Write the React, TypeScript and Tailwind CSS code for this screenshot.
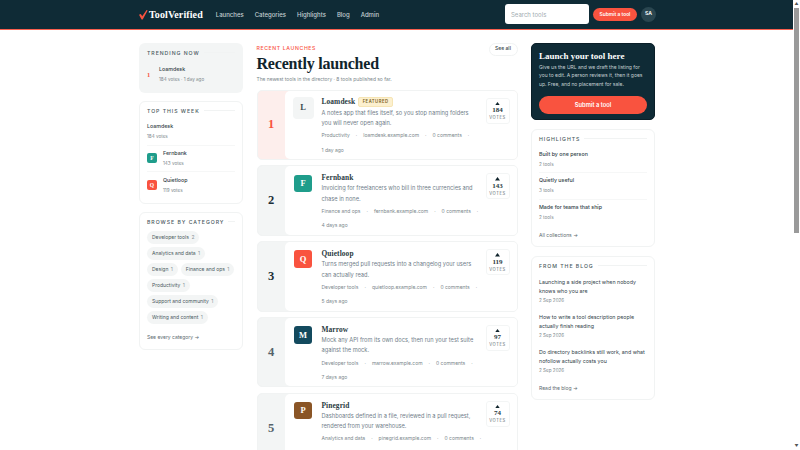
import React from "react";

const sans = "font-['Inter','Liberation_Sans',sans-serif]";
const serif = "font-['Liberation_Serif','DejaVu_Serif',serif]";

const tools = [
  { rank: 1, name: "Loamdesk", logo: "L", color: "", featured: true, votes: 184, line1: "A notes app that files itself, so you stop naming folders", line2: "you will never open again.", cat: "Productivity", domain: "loamdesk.example.com", time: "1 day ago" },
  { rank: 2, name: "Fernbank", logo: "F", color: "bg-[#1f9d8b]", votes: 143, line1: "Invoicing for freelancers who bill in three currencies and", line2: "chase in none.", cat: "Finance and ops", domain: "fernbank.example.com", time: "4 days ago" },
  { rank: 3, name: "Quietloop", logo: "Q", color: "bg-[#f9533f]", votes: 119, line1: "Turns merged pull requests into a changelog your users", line2: "can actually read.", cat: "Developer tools", domain: "quietloop.example.com", time: "5 days ago" },
  { rank: 4, name: "Marrow", logo: "M", color: "bg-[#134a5e]", votes: 97, line1: "Mock any API from its own docs, then run your test suite", line2: "against the mock.", cat: "Developer tools", domain: "marrow.example.com", time: "7 days ago" },
  { rank: 5, name: "Pinegrid", logo: "P", color: "bg-[#8a5526]", votes: 74, line1: "Dashboards defined in a file, reviewed in a pull request,", line2: "rendered from your warehouse.", cat: "Analytics and data", domain: "pinegrid.example.com", time: "9 days ago" },
];

const cats = [
  ["Developer tools", 2],
  ["Analytics and data", 1],
  ["Design", 1],
  ["Finance and ops", 1],
  ["Productivity", 1],
  ["Support and community", 1],
  ["Writing and content", 1],
];

function Heading({ children }: { children: React.ReactNode }) {
  return (
    <div className="flex items-center gap-[4px] text-[5.2px] leading-[8px] tracking-[0.95px] font-medium text-[#4a5a60] uppercase">
      <span>{children}</span>
      <span className="flex-1 h-px bg-[#f1f3f3]" />
    </div>
  );
}

function ToolRow({ t }: { t: (typeof tools)[number] }) {
  const first = t.rank === 1;
  const rankColor = first ? "text-[#f9533f]" : t.rank <= 3 ? "text-[#1c2f37]" : "text-[#55636a]";
  return (
    <article className={`flex h-[70.5px] shrink-0 rounded-[5px] overflow-hidden border border-[#f1f3f3] ${first ? "bg-[#fdeeec]" : "bg-[#f3f5f5]"}`}>
      <div className={`w-[27px] shrink-0 flex items-center justify-center ${serif} font-bold text-[12.5px] ${rankColor}`}>
        {t.rank}
      </div>
      <div className="flex-1 bg-white rounded-l-[5px] flex pl-[8px] pr-[7px] pt-[6px] gap-[8px] min-w-0">
        <div className={`w-[21px] h-[22px] shrink-0 rounded-[4px] flex items-center justify-center ${first ? "bg-[#f3f5f5]" : ""}`}>
          <div className={`w-[17.5px] h-[17.5px] rounded-[3px] flex items-center justify-center ${serif} font-bold text-[8.5px] ${first ? "text-[#3d4c52]" : `${t.color} text-white`}`}>
            {t.logo}
          </div>
        </div>
        <div className="flex-1 min-w-0">
          <div className="flex items-center gap-[3px] h-[11px]">
            <span className={`${serif} font-bold text-[7.4px] tracking-[0.1px] text-[#2a3b42]`}>{t.name}</span>
            {t.featured && (
              <span className="h-[9.5px] px-[3.5px] rounded-[2px] bg-[#fcf0cf] border border-[#f6e5b5] text-[#7a5f1c] text-[4.2px] leading-[7.5px] tracking-[0.5px] font-semibold">FEATURED</span>
            )}
          </div>
          <p className="text-[5.7px] leading-[10.5px] text-[#72808a] whitespace-nowrap">{t.line1}<br />{t.line2}</p>
          <div className="flex items-center gap-[6px] mt-[2.5px] h-[10px] text-[5px] text-[#7b878c] whitespace-nowrap">
            <span>{t.cat}</span><span>·</span><span>{t.domain}</span><span>·</span><span>0 comments</span><span>·</span>
          </div>
          <div className="text-[5px] leading-[10px] mt-[3.5px] text-[#7b878c]">{t.time}</div>
        </div>
        <div className="w-[24px] h-[26px] shrink-0 mt-[1px] rounded-[3px] border border-[#f3f5f5] flex flex-col items-center pt-[3px]">
          <svg width="5" height="3.5" viewBox="0 0 6 4" className="block"><path d="M3 0 L6 4 L0 4 Z" fill="#10242c" /></svg>
          <span className={`${serif} font-bold text-[7px] leading-[8px] mt-[1px] text-[#2a3b42]`}>{t.votes}</span>
          <span className="text-[4.2px] leading-[6px] mt-[1px] tracking-[0.6px] text-[#5d6b70]">VOTES</span>
        </div>
      </div>
    </article>
  );
}

function Side({ title, sub, logo, color, line }: { title: string; sub: string; logo?: string; color?: string; line?: boolean }) {
  return (
    <div className={`flex items-center gap-[6px] h-[26.5px] ${line ? "border-b border-[#f6f7f7]" : ""}`}>
      {logo && <div className={`w-[10px] h-[10px] rounded-[2px] flex items-center justify-center text-white font-bold text-[5.5px] ${serif} ${color}`}>{logo}</div>}
      <div>
        <div className="text-[5.3px] leading-[10px] font-medium text-[#33434a] whitespace-nowrap">{title}</div>
        <div className="text-[4.6px] leading-[10px] mt-[1px] text-[#7b878c] whitespace-nowrap">{sub}</div>
      </div>
    </div>
  );
}

export default function App() {
  return (
    <div className={`${sans} h-[450px] w-[800px] overflow-hidden flex bg-white`}>
      <div className="w-[793px] h-[450px] overflow-hidden shrink-0">
        <header className="h-[29.5px] bg-[#0f2b36] border-b-[1.5px] border-[#f9604f] flex items-center pl-[139px] pr-[137px]">
          <svg width="9" height="10" viewBox="0 0 9 10" className="shrink-0 mt-[1px]"><path d="M0 4.8 L1.8 4 L3.2 6.2 L7.6 0 L8.6 0.5 L3.7 9.5 L2.6 9.5 Z" fill="#f9533f" /></svg>
          <span className={`${serif} font-bold text-[10px] text-white ml-[1px] tracking-[0.1px]`}>ToolVerified</span>
          <nav className="flex gap-[11px] ml-[13px] mt-[1px] text-[6px] font-medium text-[#c4d0d3]">
            <span>Launches</span><span>Categories</span><span>Highlights</span><span>Blog</span><span>Admin</span>
          </nav>
          <div className="ml-auto w-[84px] h-[20px] bg-white rounded-[3px] flex items-center px-[6px] text-[6px] text-[#a2acb0]">Search tools</div>
          <button className="ml-[4px] w-[44px] h-[13px] rounded-full bg-[#f9533f] text-white text-[4.9px] font-semibold">Submit a tool</button>
          <div className="ml-[4px] w-[15px] h-[15px] rounded-full bg-[#2a4650] text-white text-[5.2px] font-semibold flex items-center justify-center">SA</div>
        </header>
        <div className="flex gap-[13.5px] pl-[139px] pt-[13px]">
          <aside className="w-[104px] shrink-0 flex flex-col gap-[8px]">
            <section className="h-[50px] rounded-[6px] bg-[#f3f5f5] px-[8px] pt-[6px]">
              <Heading>Trending now</Heading>
              <div className="flex items-center mt-[5px]">
                <span className={`${serif} font-bold w-[12px] text-[6.5px] text-[#f9533f]`}>1</span>
                <Side title="Loamdesk" sub="184 votes · 1 day ago" />
              </div>
            </section>
            <section className="h-[103px] rounded-[6px] border border-[#f1f3f3] px-[7px] pt-[5px]">
              <Heading>Top this week</Heading>
              <div className="mt-[4.5px] flex flex-col">
                <Side title="Loamdesk" sub="184 votes" line />
                <Side title="Fernbank" sub="143 votes" logo="F" color="bg-[#1f9d8b]" line />
                <Side title="Quietloop" sub="119 votes" logo="Q" color="bg-[#f9533f]" />
              </div>
            </section>
            <section className="h-[138px] rounded-[6px] border border-[#f1f3f3] px-[7px] pt-[5px]">
              <Heading>Browse by category</Heading>
              <div className="flex flex-wrap gap-x-[3px] gap-y-[3px] mt-[5px]">
                {cats.map(([c, n]) => (
                  <span key={c} className="h-[13px] px-[5px] rounded-full bg-[#f3f5f5] text-[5px] leading-[13px] text-[#4a5a60] whitespace-nowrap">{c} <span className="text-[#8c979b] ml-[1px]">{n}</span></span>
                ))}
              </div>
              <div className="mt-[9px] text-[5px] leading-[8px] text-[#5d6b70]">See every category →</div>
            </section>
          </aside>
          <main className="w-[261px] shrink-0">
            <div className="flex items-start justify-between">
              <div>
                <div className="text-[5.2px] leading-[8px] mt-px tracking-[0.6px] font-medium text-[#f9533f]">RECENT LAUNCHES</div>
                <h1 className={`${serif} font-bold text-[16px] tracking-[-0.2px] leading-[20px] mt-[2px] text-[#10242c]`}>Recently launched</h1>
                <p className="text-[4.9px] leading-[10px] text-[#7b878c]">The newest tools in the directory · 8 tools published so far.</p>
              </div>
              <span className="w-[29px] h-[13px] rounded-full border border-[#f1f3f3] text-[5px] font-medium text-[#33434a] flex items-center justify-center">See all</span>
            </div>
            <div className="flex flex-col gap-[5.3px] mt-[6px]">
              {tools.map((t) => <ToolRow key={t.rank} t={t} />)}
            </div>
          </main>
          <aside className="w-[124px] shrink-0 flex flex-col gap-[9px]">
            <section className="h-[77px] rounded-[5px] bg-[#0f2b36] border border-[#0a1f28] px-[7px] pt-[6px]">
              <h2 className={`${serif} font-bold text-[9px] leading-[12px] text-white`}>Launch your tool here</h2>
              <p className="text-[5px] leading-[8.7px] mt-[1px] text-[#c4d0d3] whitespace-nowrap">Give us the URL and we draft the listing for<br />you to edit. A person reviews it, then it goes<br />up. Free, and no placement for sale.</p>
              <button className="w-full h-[17.5px] mt-[4px] rounded-full bg-[#f9533f] text-white text-[5.8px] font-semibold">Submit a tool</button>
            </section>
            <section className="h-[118px] rounded-[6px] border border-[#f1f3f3] px-[7px] pt-[5px]">
              <Heading>Highlights</Heading>
              <div className="mt-[4px] flex flex-col">
                <Side title="Built by one person" sub="2 tools" line />
                <Side title="Quietly useful" sub="3 tools" line />
                <Side title="Made for teams that ship" sub="2 tools" />
              </div>
              <div className="mt-[5px] text-[5px] leading-[8px] text-[#5d6b70]">All collections →</div>
            </section>
            <section className="h-[144px] rounded-[6px] border border-[#f1f3f3] px-[7px] pt-[5px]">
              <Heading>From the blog</Heading>
              <div className="mt-[8px] flex flex-col gap-[6.5px] text-[5.3px] leading-[9px] text-[#33434a]">
                {[["Launching a side project when nobody", "knows who you are"], ["How to write a tool description people", "actually finish reading"], ["Do directory backlinks still work, and what", "nofollow actually costs you"]].map(([a, b]) => (
                  <div key={a} className="whitespace-nowrap">
                    <div>{a}<br />{b}</div>
                    <div className="text-[4.6px] leading-[10.5px] text-[#7b878c]">2 Sep 2026</div>
                  </div>
                ))}
              </div>
              <div className="mt-[8px] text-[5px] leading-[8px] text-[#5d6b70]">Read the blog →</div>
            </section>
          </aside>
        </div>
      </div>
      <div className="w-[7px] h-[450px] bg-white flex flex-col items-center">
        <span className="h-[8px] text-[4px] leading-[8px] text-[#555]">▲</span>
        <div className="w-[5px] h-[225px] bg-[#9a9a9a]" />
        <span className="mt-auto h-[8px] text-[4px] leading-[8px] text-[#555]">▼</span>
      </div>
    </div>
  );
}
